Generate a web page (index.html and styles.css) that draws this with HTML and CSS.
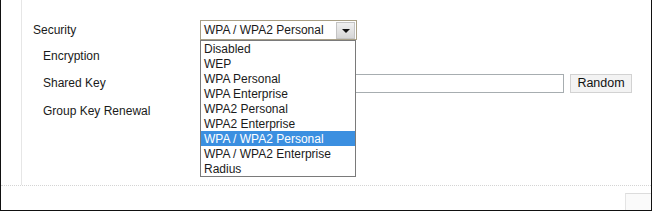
FILE: index.html
```html
<!DOCTYPE html>
<html lang="en">
<head>
  <meta charset="UTF-8" />
  <title>Wireless Security</title>
  <link rel="stylesheet" href="styles.css">
</head>
<body>
  <div class="frame">
    <div class="content">
      <div class="row row-security">
        <label class="label">Security</label>
        <div class="select">
          <span class="select-value">WPA / WPA2 Personal</span>
          <span class="select-arrow"></span>
          <ul class="select-list">
            <li>Disabled</li>
            <li>WEP</li>
            <li>WPA Personal</li>
            <li>WPA Enterprise</li>
            <li>WPA2 Personal</li>
            <li>WPA2 Enterprise</li>
            <li class="active">WPA / WPA2 Personal</li>
            <li>WPA / WPA2 Enterprise</li>
            <li>Radius</li>
          </ul>
        </div>
      </div>
      <div class="row row-enc">
        <label class="label sub">Encryption</label>
      </div>
      <div class="row row-key">
        <label class="label sub">Shared Key</label>
        <input type="text" class="key-input" />
        <button class="btn">Random</button>
      </div>
      <div class="row row-renew">
        <label class="label sub">Group Key Renewal</label>
      </div>
    </div>
    <div class="footer">
      <div class="corner-box"></div>
    </div>
  </div>
</body>
</html>
```

FILE: styles.css
```css
* {
  box-sizing: border-box;
}
body {
  margin: 0;
  font-family: 'Liberation Sans', Arial, sans-serif;
  font-size: 12px;
  color: #1a1a1a;
  background: #fff;
}
.frame {
  width: 652px;
  height: 211px;
  border-left: 1px solid #111;
  border-right: 1px solid #111;
  border-bottom: 1px solid #111;
  overflow: hidden;
}
.content {
  margin-left: 20px;
  height: 185px;
  border-left: 1px solid #e6e6e6;
  padding-top: 20px;
  padding-left: 11px;
}
.row {
  display: flex;
  align-items: center;
  height: 20px;
}
.row-enc { margin-top: 6px; }
.row-key { margin-top: 7px; }
.row-renew { margin-top: 8px; }
.label {
  width: 167px;
  flex: none;
}
.label.sub {
  padding-left: 10px;
}
.select {
  position: relative;
  width: 157px;
  height: 20px;
  border: 1px solid #a89f86;
  display: flex;
  align-items: center;
  background: #fff;
  z-index: 2;
}
.select-value {
  flex: 1;
  padding-left: 3px;
  line-height: 18px;
}
.select-arrow {
  width: 19px;
  height: 17px;
  margin-right: 1px;
  background: linear-gradient(#f0f0f0, #d6d6d6);
  border: 1px solid #c4c4c4;
  position: relative;
}
.select-arrow::after {
  content: "";
  position: absolute;
  left: 5px;
  top: 6px;
  border-left: 4px solid transparent;
  border-right: 4px solid transparent;
  border-top: 4px solid #111;
}
.select-list {
  position: absolute;
  left: -1px;
  top: 19px;
  width: 156px;
  margin: 0;
  padding: 0;
  list-style: none;
  background: #fff;
  border: 1px solid #7a7a7a;
}
.select-list li {
  height: 15px;
  line-height: 14px;
  padding-top: 1px;
  padding-left: 3px;
  white-space: nowrap;
}
.select-list li.active {
  background: #3b8fe0;
  color: #fff;
}
.key-input {
  width: 364px;
  height: 19px;
  border: 1px solid #a7adb0;
  margin: 0;
  padding: 0 3px;
  font: inherit;
}
.btn {
  margin-left: 6px;
  width: 62px;
  height: 19px;
  padding: 0;
  font: inherit;
  font-size: 12.5px;
  color: #111;
  background: #f3f3f3;
  border: 1px solid #d2d2d2;
  border-radius: 0;
}
.footer {
  border-top: 1px dotted #d4d4d4;
  height: 25px;
  display: flex;
  justify-content: flex-end;
  align-items: flex-end;
}
.corner-box {
  width: 26px;
  height: 17px;
  border-top: 1px solid #dcdcdc;
  border-left: 1px solid #e4e4e4;
  background: #fafafa;
}
```
